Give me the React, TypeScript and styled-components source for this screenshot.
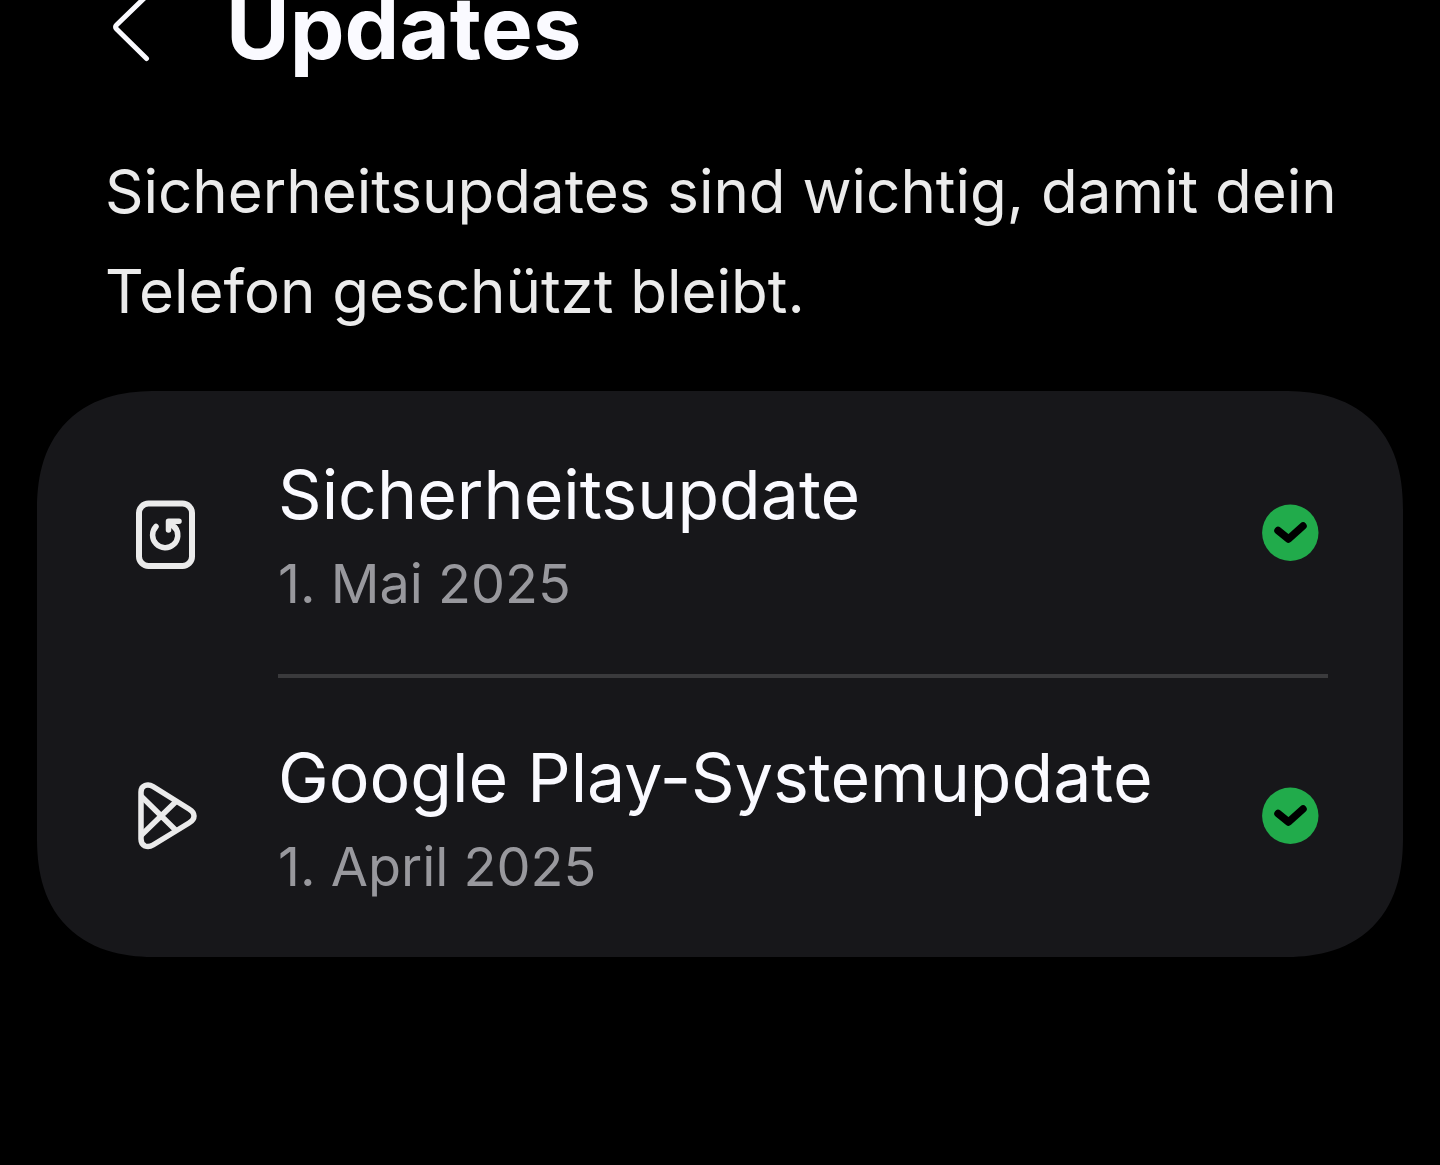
import React from "react";
import styled, { createGlobalStyle } from "styled-components";

const GlobalStyle = createGlobalStyle`
  *, *::before, *::after { box-sizing: border-box; }
  html { background: #000; }
  body {
    margin: 0;
    background: #000;
    color: #fafaff;
    font-family: Inter, "Liberation Sans", sans-serif;
  }
`;

const Screen = styled.main`
  min-height: 100vh;
  padding: 0 37px 64px;
`;

const Header = styled.header`
  display: flex;
  align-items: center;
  height: 56px;
  padding-left: 75px;
`;

const BackButton = styled.button`
  display: flex;
  flex: none;
  width: 114px;
  padding: 0;
  border: 0;
  background: none;
  color: inherit;
  cursor: pointer;
`;

const Title = styled.h1`
  margin: 0;
  font-size: 87px;
  line-height: 56px;
  font-weight: 700;
`;

const Intro = styled.p`
  margin: 85px 60px 50px 68px;
  color: #ebebeb;
  font-size: 60px;
  line-height: 100px;
`;

const Card = styled.ul`
  margin: 0;
  padding: 0;
  list-style: none;
  background: #17171a;
  border-radius: 100px;

  @supports (corner-shape: superellipse(1.25)) {
    border-radius: 120px;
    corner-shape: superellipse(1.25);
  }
`;

const Item = styled.li`
  & + &::before {
    content: "";
    display: block;
    height: 4px;
    margin: 0 75px -4px 241px;
    background: #3a3a3c;
  }
`;

const RowButton = styled.button`
  display: flex;
  align-items: center;
  width: 100%;
  min-height: 283px;
  padding: 0 84px 0 96px;
  border: 0;
  background: none;
  color: inherit;
  font: inherit;
  text-align: left;
  cursor: pointer;
`;

const IconSlot = styled.span`
  display: flex;
  flex: none;
  width: 145px;
`;

const RowText = styled.span`
  display: flex;
  flex: 1;
  flex-direction: column;
  gap: 14px;
  min-width: 0;
  padding-top: 4px;
`;

const RowTitle = styled.span`
  font-size: 68px;
  line-height: 84px;
`;

const RowDate = styled.span`
  color: #98989d;
  font-size: 54px;
  line-height: 68px;
`;

const Glyph = styled.svg`
  display: block;
  flex: none;
  overflow: visible;
`;

const BackIcon = () => (
  <Glyph width="38" height="68" viewBox="0 0 38 68" fill="none" stroke="currentColor" strokeWidth="5" strokeLinecap="round" strokeLinejoin="round" aria-hidden="true">
    <path d="M35 1.5 L4.500 31 Q2.500 33 4.500 35 L34.500 64.500" />
  </Glyph>
);

const PatchIcon = () => (
  <Glyph width="64" height="72" viewBox="0 0 64 72" fill="none" stroke="#ebebeb" strokeWidth="6" strokeLinecap="round" strokeLinejoin="round" aria-hidden="true">
    <rect x="6" y="6.5" width="53" height="62.5" rx="9.5" />
    <g strokeWidth="5.5">
      <path d="M23 29.500 A12.600 12.600 0 1 0 42 30.200" />
      <path d="M35.500 33 V24.300 H46" />
      <path d="M36 25 L42.500 31.500" />
    </g>
  </Glyph>
);

const PlayIcon = () => (
  <Glyph width="64" height="72" viewBox="0 0 64 72" fill="none" stroke="#ebebeb" strokeWidth="5.5" strokeLinecap="round" strokeLinejoin="round" aria-hidden="true">
    <path d="M8 12 Q8 7 12 5.500 Q16 4 20 6.500 L56 29 Q61 32 61 36 Q61 40 56 43 L20 65 Q16 67.500 12 66 Q8 64 8 59 Z" />
    <path d="M9 17 L42.500 50 M9 54.500 L42.500 22" />
  </Glyph>
);

const CheckIcon = () => (
  <Glyph width="58" height="58" viewBox="0 0 58 58" fill="none" role="img" aria-label="Aktuell">
    <circle cx="29.3" cy="28.7" r="28.2" fill="#21ab4b" />
    <path d="M17 26.500 L27.500 35 L42 22" stroke="#000" strokeWidth="7.5" strokeLinecap="round" strokeLinejoin="round" />
  </Glyph>
);

const updates = [
  { title: "Sicherheitsupdate", date: "1. Mai 2025", Icon: PatchIcon },
  { title: "Google Play-Systemupdate", date: "1. April 2025", Icon: PlayIcon },
];

export default function App() {
  return (
    <>
      <GlobalStyle />
      <Screen>
        <Header>
          <BackButton type="button" aria-label="Zurück">
            <BackIcon />
          </BackButton>
          <Title>Updates</Title>
        </Header>
        <Intro>Sicherheitsupdates sind wichtig, damit dein Telefon geschützt bleibt.</Intro>
        <Card>
          {updates.map(({ title, date, Icon }) => (
            <Item key={title}>
              <RowButton type="button">
                <IconSlot>
                  <Icon />
                </IconSlot>
                <RowText>
                  <RowTitle>{title}</RowTitle>
                  <RowDate>{date}</RowDate>
                </RowText>
                <CheckIcon />
              </RowButton>
            </Item>
          ))}
        </Card>
      </Screen>
    </>
  );
}
